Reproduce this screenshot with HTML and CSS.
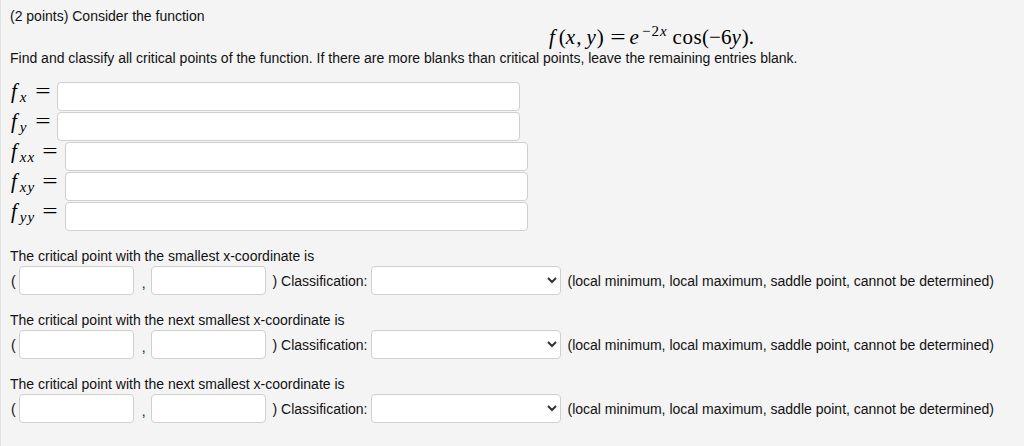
FILE: index.html
```html
<!DOCTYPE html>
<html>
<head>
<meta charset="utf-8">
<link rel="stylesheet" href="styles.css">
</head>
<body>
<div class="page">
  <p class="intro">(2 points) Consider the function</p>
  <div class="formula"><span class="math"><i class="mf">f</i>(<i>x</i>,<span class="thin"></span><i>y</i>)<span class="rel">=</span><i>e</i><sup>−2<i>x</i></sup><span class="op">cos</span>(−6<i>y</i>).</span></div>
  <p class="task">Find and classify all critical points of the function. If there are more blanks than critical points, leave the remaining entries blank.</p>
  <div class="derivs">
    <div class="drow"><span class="lbl"><i class="mf">f</i><sub><i>x</i></sub><span class="eq">=</span></span><input class="ans" type="text"></div>
    <div class="drow"><span class="lbl"><i class="mf">f</i><sub><i>y</i></sub><span class="eq">=</span></span><input class="ans" type="text"></div>
    <div class="drow"><span class="lbl"><i class="mf">f</i><sub><i>xx</i></sub><span class="eq">=</span></span><input class="ans" type="text"></div>
    <div class="drow"><span class="lbl"><i class="mf">f</i><sub><i>xy</i></sub><span class="eq">=</span></span><input class="ans" type="text"></div>
    <div class="drow"><span class="lbl"><i class="mf">f</i><sub><i>yy</i></sub><span class="eq">=</span></span><input class="ans" type="text"></div>
  </div>

  <div class="cp">
    <p class="cp-title">The critical point with the smallest x-coordinate is</p>
    <div class="cp-row">
      <span class="paren">(</span><input class="coord" type="text"><span class="comma">,</span><input class="coord" type="text"><span class="cls">) Classification:</span><select class="pick"><option></option><option>local minimum</option><option>local maximum</option><option>saddle point</option><option>cannot be determined</option></select><span class="opts">(local minimum, local maximum, saddle point, cannot be determined)</span>
    </div>
  </div>
  <div class="cp">
    <p class="cp-title">The critical point with the next smallest x-coordinate is</p>
    <div class="cp-row">
      <span class="paren">(</span><input class="coord" type="text"><span class="comma">,</span><input class="coord" type="text"><span class="cls">) Classification:</span><select class="pick"><option></option><option>local minimum</option><option>local maximum</option><option>saddle point</option><option>cannot be determined</option></select><span class="opts">(local minimum, local maximum, saddle point, cannot be determined)</span>
    </div>
  </div>
  <div class="cp">
    <p class="cp-title">The critical point with the next smallest x-coordinate is</p>
    <div class="cp-row">
      <span class="paren">(</span><input class="coord" type="text"><span class="comma">,</span><input class="coord" type="text"><span class="cls">) Classification:</span><select class="pick"><option></option><option>local minimum</option><option>local maximum</option><option>saddle point</option><option>cannot be determined</option></select><span class="opts">(local minimum, local maximum, saddle point, cannot be determined)</span>
    </div>
  </div>
</div>
</body>
</html>
```

FILE: styles.css
```css
html, body {
  margin: 0;
  padding: 0;
  background: #f4f4f4;
}
.page {
  box-sizing: border-box;
  min-height: 446px;
  padding: 8px 0 0 10px;
  border-left: 1px solid #e2e2e2;
  font-family: "Liberation Sans", Arial, sans-serif;
  font-size: 14px;
  line-height: 16px;
  color: #111;
}
p { margin: 0; }
.intro { margin-left: -1px; }
.formula {
  margin-top: 3px;
  height: 20px;
  line-height: 20px;
  padding-left: 538px;
}
.math, .lbl {
  font-family: "Liberation Serif", "Times New Roman", serif;
  font-size: 21px;
  color: #000;
  white-space: nowrap;
}
.math i, .lbl i { font-style: italic; letter-spacing: 1px; }
.math .mf { margin-right: 3px; }
.thin { display: inline-block; width: 5px; }
.rel { margin: 0 6px 0 8px; transform: scaleX(1.3); display: inline-block; }
.op { margin-left: 5px; letter-spacing: 0.5px; }
.math sup {
  font-size: 15px;
  vertical-align: 0;
  position: relative;
  top: -8px;
  margin-left: 2px;
  letter-spacing: 1px;
}
.task { margin-top: 3px; margin-left: -1px; }
.derivs { margin-top: 16px; }
.drow {
  display: flex;
  align-items: flex-start;
  height: 30px;
}
.lbl {
  display: flex;
  align-items: baseline;
  padding-top: 1px;
  margin-right: 9px;
}
.lbl .mf { margin-right: 2px; }
.lbl sub {
  font-size: 15px;
  vertical-align: 0;
  position: relative;
  top: 4px;
  margin-left: 0;
}
.eq { margin-left: 9px; display: inline-block; transform: scaleX(1.3); }
input, select {
  box-sizing: border-box;
  height: 29px;
  background: #fff;
  border: 1px solid #cfcfcf;
  border-radius: 4px;
  margin: 0;
  font: inherit;
}
.ans { width: 463px; }
.cp { margin-top: 16px; }
.cp + .cp { margin-top: 17px; }
.cp-title { margin-left: -1px; }
.cp-row {
  display: flex;
  align-items: center;
  margin-top: 2px;
  height: 29px;
  white-space: nowrap;
}
.paren { margin-right: 3px; }
.coord { width: 115px; }
.comma { margin: 4px 5px 0 8px; }
.cls { margin-left: 7px; margin-right: 4px; }
.pick {
  width: 190px;
  color: #333;
  padding: 0 6px;
}
.opts { margin-left: 6px; }
```
